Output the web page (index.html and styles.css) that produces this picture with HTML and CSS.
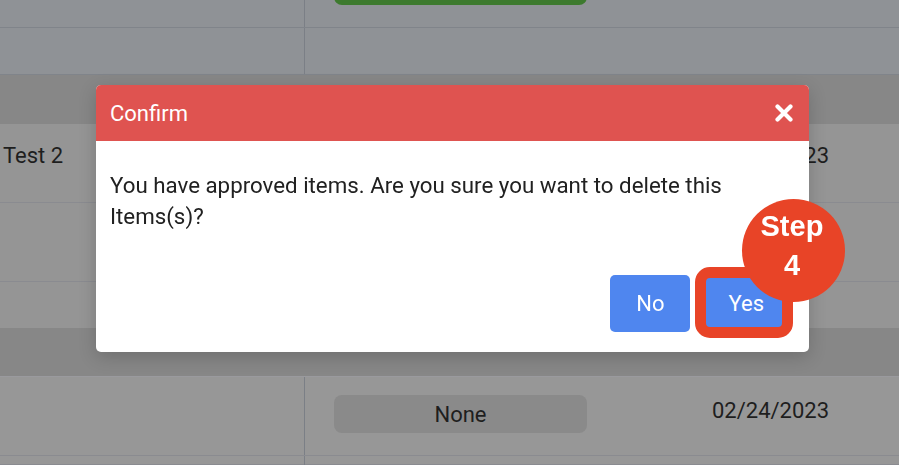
FILE: index.html
```html
<!DOCTYPE html>
<html lang="en">
<head>
    <meta charset="UTF-8">
    <meta name="viewport" content="width=device-width, initial-scale=1.0">
    <title>Items - Delete</title>
    <link rel="stylesheet" href="styles.css">
</head>
<body>
    <div class="table">
        <div class="row row-blue">
            <div class="cell cell-name"></div>
            <div class="cell cell-status"><span class="pill pill-green"></span></div>
            <div class="cell cell-date"></div>
        </div>
        <div class="row row-blue row-short">
            <div class="cell cell-name"></div>
            <div class="cell cell-status"></div>
            <div class="cell cell-date"></div>
        </div>
        <div class="row row-band"></div>
        <div class="row row-tall">
            <div class="cell cell-name">Test 2</div>
            <div class="cell cell-status"></div>
            <div class="cell cell-date">02/24/2023</div>
        </div>
        <div class="row row-tall">
            <div class="cell cell-name"></div>
            <div class="cell cell-status"></div>
            <div class="cell cell-date"></div>
        </div>
        <div class="row row-short row-plain"></div>
        <div class="row row-band row-band-low"></div>
        <div class="row row-tall row-lined">
            <div class="cell cell-name"></div>
            <div class="cell cell-status"><span class="pill pill-grey">None</span></div>
            <div class="cell cell-date">02/24/2023</div>
        </div>
        <div class="row row-last row-lined">
            <div class="cell cell-name"></div>
            <div class="cell cell-status"></div>
            <div class="cell cell-date"></div>
        </div>
    </div>

    <div class="overlay">
        <div class="modal">
            <div class="modal-header">
                <span class="modal-title">Confirm</span>
                <button class="close-btn" aria-label="Close">
                    <svg width="18" height="18" viewBox="0 0 18 18">
                        <path d="M2.5 2.5 L15.5 15.5 M15.5 2.5 L2.5 15.5" stroke="#ffffff" stroke-width="4.2" stroke-linecap="round" fill="none"/>
                    </svg>
                </button>
            </div>
            <div class="modal-body">
                You have approved items. Are you sure you want to delete this Items(s)?
            </div>
            <div class="modal-footer">
                <button class="btn">No</button>
                <div class="highlight">
                    <button class="btn">Yes</button>
                    <span class="highlight-frame"></span>
                    <span class="step-badge">Step<br>4</span>
                </div>
            </div>
        </div>
    </div>
</body>
</html>
```

FILE: styles.css
```css
body {
    margin: 0;
    font-family: Roboto, "Noto Sans", sans-serif;
    background: #959595;
    overflow: hidden;
    height: 100vh;
}
.table {
    margin-top: -51px;
    color: #1e1e1e;
    font-size: 22px;
}
.row {
    display: grid;
    grid-template-columns: 305px 312px 1fr;
    height: 78px;
    background: #959595;
    border-bottom: 1px solid #8a8b90;
    box-sizing: content-box;
}
.row-blue {
    background: #8f9296;
    border-bottom-color: #80848a;
}
.row-short {
    height: 46px;
}
.row-band {
    height: 49px;
    background: #878787;
    border-bottom: none;
}
.row-band-low {
    height: 48px;
    border-bottom: 1px solid #9a9a9e;
}
.row-tall {
    height: 78px;
}
.row-last {
    height: 8px;
}
.row-plain {
    border-bottom: none;
}
.row-lined {
    background: #979797;
}
.cell {
    padding-top: 19px;
    box-sizing: border-box;
}
.cell-name {
    padding-left: 3px;
}
.row-blue .cell-name,
.row-lined .cell-name {
    border-right: 1px solid #7b7f86;
}
.cell-status {
    padding-top: 18px;
    padding-left: 29px;
}
.cell-date {
    padding-left: 95px;
}
.row-lined .cell-date {
    padding-top: 21px;
}
.pill {
    display: flex;
    justify-content: center;
    align-items: center;
    width: 253px;
    height: 38px;
    border-radius: 8px;
}
.pill-green {
    background: #3d7a2e;
}
.pill-grey {
    background: #8a8a8a;
}
.overlay {
    position: fixed;
    top: 0;
    left: 0;
    right: 0;
    bottom: 0;
    padding: 85px 0 0 96px;
}
.modal {
    width: 713px;
    background: #ffffff;
    border-radius: 5px;
    box-shadow: 0 5px 18px rgba(0, 0, 0, 0.18);
}
.modal-header {
    display: flex;
    justify-content: space-between;
    align-items: center;
    height: 56px;
    padding: 0 16px 0 14px;
    background: #df5350;
    border-radius: 5px 5px 0 0;
    color: #ffffff;
    font-size: 22px;
}
.close-btn {
    display: flex;
    padding: 0;
    border: none;
    background: none;
    cursor: pointer;
}
.modal-body {
    padding: 29px 14px 0 14px;
    font-size: 22.3px;
    line-height: 31px;
    color: #212121;
}
.modal-footer {
    display: flex;
    justify-content: flex-end;
    gap: 12px;
    padding: 43px 19px 20px 0;
}
.btn {
    height: 57px;
    padding: 0 26px;
    border: none;
    border-radius: 5px;
    background: #4f86ef;
    color: #ffffff;
    font-family: Roboto, sans-serif;
    font-size: 22px;
    cursor: pointer;
}
.highlight {
    position: relative;
    display: flex;
}
.highlight-frame {
    position: absolute;
    top: -8px;
    left: -7px;
    width: 98px;
    height: 71px;
    box-sizing: border-box;
    border: 11px solid #e84427;
    border-radius: 15px;
}
.step-badge {
    position: absolute;
    top: -76px;
    left: 40px;
    width: 103px;
    height: 103px;
    box-sizing: border-box;
    padding: 8px 4px 0 0;
    border-radius: 50%;
    background: #e84427;
    color: #ffffff;
    font-family: "Liberation Sans", Arial, sans-serif;
    font-weight: bold;
    font-size: 29px;
    line-height: 39px;
    text-align: center;
}
```
